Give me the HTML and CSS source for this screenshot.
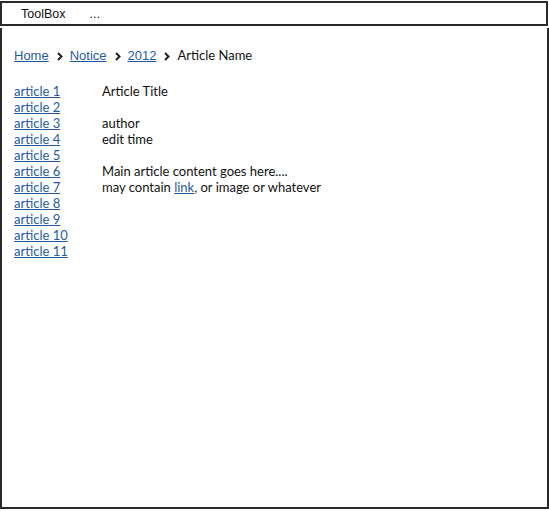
FILE: index.html
```html
<!DOCTYPE html>
<html>
<head>
<meta charset="utf-8">
<link rel="stylesheet" href="styles.css">
</head>
<body>
<div class="toolbar">
  <span class="tool">ToolBox</span>
  <span class="tool">...</span>
</div>
<div class="main">
  <nav class="crumbs">
    <a href="#">Home</a>
    <svg class="chev" width="6" height="9" viewBox="0 0 6 9"><path d="M1 1 L4.5 4.5 L1 8" fill="none" stroke="#222" stroke-width="2"/></svg>
    <a href="#">Notice</a>
    <svg class="chev" width="6" height="9" viewBox="0 0 6 9"><path d="M1 1 L4.5 4.5 L1 8" fill="none" stroke="#222" stroke-width="2"/></svg>
    <a href="#">2012</a>
    <svg class="chev" width="6" height="9" viewBox="0 0 6 9"><path d="M1 1 L4.5 4.5 L1 8" fill="none" stroke="#222" stroke-width="2"/></svg>
    <span class="current">Article Name</span>
  </nav>
  <div class="body">
    <ul class="list">
      <li><a href="#">article 1</a></li>
      <li><a href="#">article 2</a></li>
      <li><a href="#">article 3</a></li>
      <li><a href="#">article 4</a></li>
      <li><a href="#">article 5</a></li>
      <li><a href="#">article 6</a></li>
      <li><a href="#">article 7</a></li>
      <li><a href="#">article 8</a></li>
      <li><a href="#">article 9</a></li>
      <li><a href="#">article 10</a></li>
      <li><a href="#">article 11</a></li>
    </ul>
    <div class="article">
      <div>Article Title</div>
      <div>&nbsp;</div>
      <div>author</div>
      <div>edit time</div>
      <div>&nbsp;</div>
      <div>Main article content goes here....</div>
      <div>may contain <a href="#">link</a>, or image or whatever</div>
    </div>
  </div>
</div>
</body>
</html>
```

FILE: styles.css
```css
html, body {
  margin: 0;
  padding: 0;
  background: #fff;
}
body {
  width: 549px;
  height: 511px;
  font-family: Lato, "Open Sans", sans-serif;
  font-size: 13px;
  color: #111;
}
a {
  color: #1f5aa0;
  text-decoration: underline;
}
.toolbar {
  box-sizing: border-box;
  margin-top: 1px;
  width: 548px;
  height: 25px;
  border: 2px solid #2a2a2a;
  display: flex;
  align-items: center;
  gap: 24px;
  padding-left: 19px;
  font-family: "Liberation Sans", Arial, sans-serif;
  font-size: 12.5px;
}
.main {
  box-sizing: border-box;
  margin-top: 2px;
  width: 549px;
  height: 481px;
  border: 2px solid #2a2a2a;
  border-top: 0;
  padding: 18px 12px 0 12px;
}
.crumbs {
  display: flex;
  align-items: center;
  height: 18px;
  font-family: "Liberation Sans", Arial, sans-serif;
  font-size: 13px;
}
.crumbs .chev {
  margin: 2px 7px 0 8px;
}
.crumbs .current {
  font-family: Lato, sans-serif;
  font-size: 13px;
  color: #111;
}
.body {
  display: flex;
  margin-top: 19px;
}
.list {
  list-style: none;
  margin: 0;
  padding: 0;
  width: 88px;
  line-height: 16px;
}
.article {
  line-height: 16px;
}
```
